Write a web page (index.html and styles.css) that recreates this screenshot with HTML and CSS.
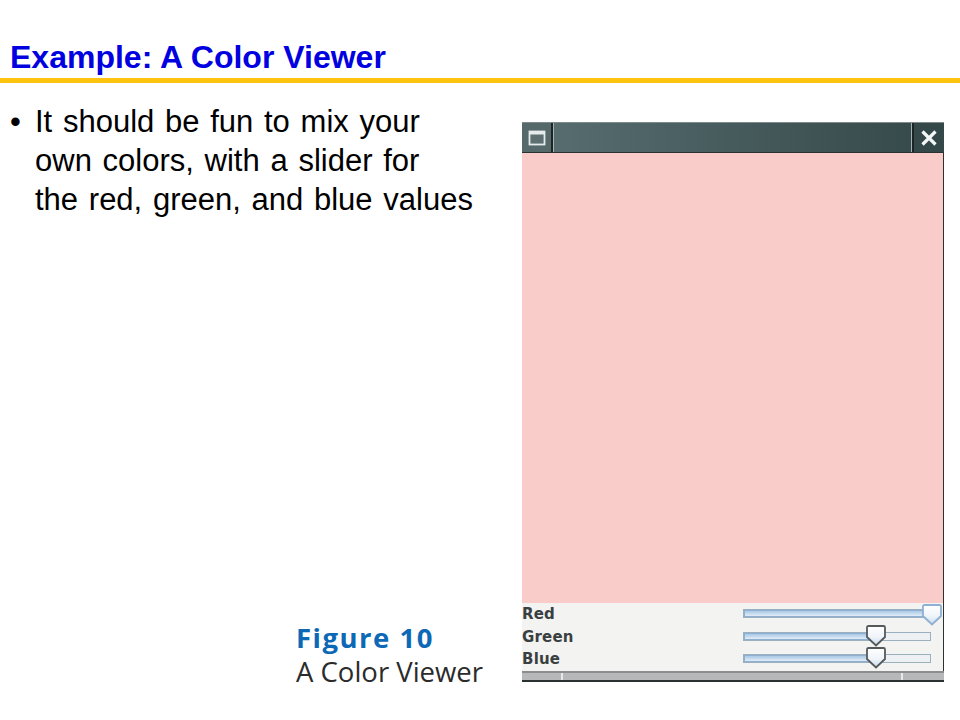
FILE: index.html
```html
<!DOCTYPE html>
<html lang="en">
<head>
<meta charset="utf-8">
<title>Example: A Color Viewer</title>
<link rel="stylesheet" href="styles.css">
</head>
<body>
<div class="slide">
  <header class="head">
    <h1 class="title">Example: A Color Viewer</h1>
  </header>
  <main class="content">
    <div class="left">
      <ul class="bullets">
        <li>It should be fun to mix your<br>own colors, with a slider for<br>the red, green, and blue values</li>
      </ul>
      <div class="figure">
        <div class="fig-num">Figure 10</div>
        <div class="fig-cap">A Color Viewer</div>
      </div>
    </div>
    <div class="window">
      <div class="titlebar">
        <div class="tb-btn tb-left">
          <svg width="18" height="16" viewBox="0 0 18 16"><rect x="1.500" y="1.500" width="15" height="13" fill="#5d6f70" stroke="#e6ecec" stroke-width="1.800"/><rect x="1.500" y="1.500" width="15" height="3" fill="#e6ecec"/></svg>
        </div>
        <div class="tb-fill"></div>
        <div class="tb-btn tb-right">
          <svg width="18" height="18" viewBox="0 0 18 18"><path d="M2.500 2.500 15.500 15.500M15.500 2.500 2.500 15.500" stroke="#f4f7f7" stroke-width="3.200"/></svg>
        </div>
      </div>
      <div class="swatch"></div>
      <div class="panel">
        <div class="row row-red">
          <span class="label">Red</span>
          <div class="track"><div class="fill fill-full"></div>
            <svg class="thumb thumb-red" width="22" height="22" viewBox="0 0 22 22"><use href="#thumb-red"/></svg>
          </div>
        </div>
        <div class="row row-green">
          <span class="label">Green</span>
          <div class="track"><div class="fill fill-70"></div>
            <svg class="thumb thumb-mid" width="22" height="22" viewBox="0 0 22 22"><use href="#thumb"/></svg>
          </div>
        </div>
        <div class="row row-blue">
          <span class="label">Blue</span>
          <div class="track"><div class="fill fill-70"></div>
            <svg class="thumb thumb-mid" width="22" height="22" viewBox="0 0 22 22"><use href="#thumb"/></svg>
          </div>
        </div>
      </div>
      <div class="status">
        <div class="st st-a"></div>
        <div class="st st-b"></div>
        <div class="st st-c"></div>
      </div>
    </div>
  </main>
</div>
<svg class="defs" width="0" height="0">
  <defs>
    <linearGradient id="tg" x1="0" y1="0" x2="0" y2="1"><stop offset="0" stop-color="#ffffff"/><stop offset="0.55" stop-color="#f0f5fa"/><stop offset="1" stop-color="#c9dcee"/></linearGradient>
    <path id="thumb" d="M2 2.500Q2 1 3.500 1H18.500Q20 1 20 2.500V12L11 20.500 2 12Z" fill="url(#tg)" stroke="#54595c" stroke-width="1.800"/>
    <path id="thumb-red" d="M2 2.500Q2 1 3.500 1H18.500Q20 1 20 2.500V12L11 20.500 2 12Z" fill="url(#tg)" stroke="#8fb0d2" stroke-width="1.800"/>
  </defs>
</svg>
</body>
</html>
```
FILE: styles.css
```css
* { box-sizing: border-box; }
html, body { margin: 0; padding: 0; background: #fff; }
.slide {
  width: 960px; height: 720px; display: flex; flex-direction: column;
  font-family: "Liberation Sans", Arial, sans-serif; overflow: hidden;
}
.head { padding-top: 39px; border-bottom: 5px solid #fdc30f; height: 83px; }
.title { margin: 0 0 0 10px; font-size: 32px; line-height: 36px; font-weight: 700; color: #0000e0; white-space: nowrap; }
.content { display: flex; height: 599px; padding-top: 39px; }
.left { width: 522px; height: 560px; display: flex; flex-direction: column; }
.bullets { margin: -20px 0 0; padding: 0 0 0 35px; list-style: none; font-size: 31px; line-height: 39px; word-spacing: 2.100px; color: #000; }
.bullets li { position: relative; }
.bullets li::before { content: "•"; position: absolute; left: -25px; top: 0; }
.figure { margin-top: auto; padding-left: 296px; margin-bottom: -8px; }
.fig-num { font-family: "Open Sans", sans-serif; font-weight: 700; font-size: 27.500px; line-height: 32px; letter-spacing: 1.500px; color: #0d68b5; }
.fig-cap { font-family: "Open Sans", sans-serif; font-size: 27.500px; line-height: 36px; color: #2b2b2b; }
.window { width: 422px; height: 560px; display: flex; flex-direction: column; background: #2c3131; }
.titlebar { height: 30px; display: flex; background: #3d5153; border-top: 1px solid #7d8b8b; }
.tb-btn { width: 31px; display: flex; align-items: center; justify-content: center; background: #55686a; }
.tb-left { border-right: 2px solid #1c2526; box-shadow: 1px 0 0 #a5b0b0; }
.tb-right { background: #34484a; border-left: 2px solid #1c2526; box-shadow: -1px 0 0 #a5b0b0; width: 32px; }
.tb-fill { flex: 1; margin-left: 1px; background: linear-gradient(90deg, #566c6e, #374a4c); }
.swatch { height: 450px; background: #f9cbc9; margin-top: 1px; border-right: 1px solid #2c3131; }
.panel { height: 68px; background: #f3f3f1; display: flex; flex-direction: column; position: relative; border-right: 1px solid #2c3131; }
.row { height: 22px; display: flex; position: relative; }
.row-green { margin-top: 1px; }
.label { font-family: "DejaVu Sans", sans-serif; font-weight: 700; font-size: 15px; line-height: 22px; color: #3a3f42; width: 221px; letter-spacing: 0.2px; }
.track { position: relative; width: 188px; height: 9px; margin-top: 6px; border: 1px solid #9ab0bf; background: #edf1f3; }
.fill { height: 100%; background: linear-gradient(#a9c8e6, #e2edf7); border: 1px solid #8fb0d2; }
.fill-full { width: 100%; }
.fill-70 { width: 68%; }
.thumb { position: absolute; }
.thumb-red { left: 177px; top: -6px; }
.thumb-mid { left: 121px; top: -8px; }
.status { flex: 1; display: flex; background: #b6b8ba; border-top: 2px solid #8b8d8f; border-bottom: 2px solid #2c3131; }
.st { height: 100%; }
.st-a { width: 41px; border-right: 2px solid #e8e8e8; }
.st-b { flex: 1; border-right: 2px solid #e8e8e8; }
.st-c { width: 41px; }
.defs { position: absolute; }
```
